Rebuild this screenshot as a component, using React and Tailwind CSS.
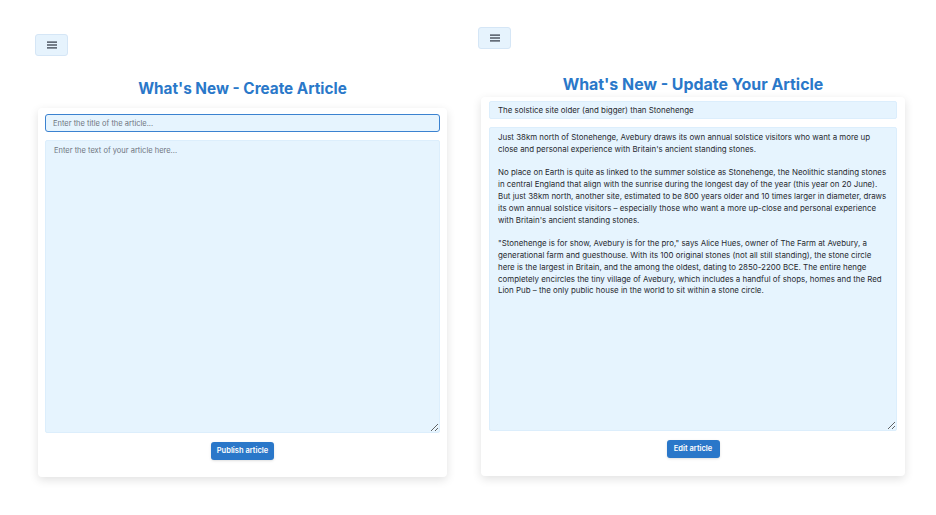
import React from 'react';

const article = `Just 38km north of Stonehenge, Avebury draws its own annual solstice visitors who want a more up
close and personal experience with Britain's ancient standing stones.

No place on Earth is quite as linked to the summer solstice as Stonehenge, the Neolithic standing stones
in central England that align with the sunrise during the longest day of the year (this year on 20 June).
But just 38km north, another site, estimated to be 800 years older and 10 times larger in diameter, draws
its own annual solstice visitors – especially those who want a more up-close and personal experience
with Britain's ancient standing stones.

"Stonehenge is for show, Avebury is for the pro," says Alice Hues, owner of The Farm at Avebury, a
generational farm and guesthouse. With its 100 original stones (not all still standing), the stone circle
here is the largest in Britain, and the among the oldest, dating to 2850-2200 BCE. The entire henge
completely encircles the tiny village of Avebury, which includes a handful of shops, homes and the Red
Lion Pub – the only public house in the world to sit within a stone circle.`;

const MenuButton = () => (
  <button className="flex h-[22px] w-[33px] items-center justify-center rounded-[3px] border border-[#d5e6f6] bg-[#e6f3fd]">
    <svg width="10" height="8" viewBox="0 0 10 8" className="text-[#2d3440]">
      <rect x="0" y="0.5" width="10" height="1.2" fill="currentColor" />
      <rect x="0" y="3.4" width="10" height="1.2" fill="currentColor" />
      <rect x="0" y="6.3" width="10" height="1.2" fill="currentColor" />
    </svg>
  </button>
);

const ActionButton = ({ children, width }) => (
  <button
    className={`h-[18px] ${width} rounded-[3px] bg-[#2a77c9] text-[7.5px] font-semibold text-white shadow-sm`}
  >
    {children}
  </button>
);

export default function App() {
  return (
    <div className="flex h-[515px] w-[936px] bg-white font-['Inter','Noto_Sans',sans-serif] text-[#262a30]">
      {/* Create article */}
      <div className="ml-[35px] w-[415px] pt-[34px]">
        <MenuButton />
        <h1 className="mt-[22px] text-center text-[15.3px] font-bold leading-[22px] text-[#2a78c9]">
          What's New - Create Article
        </h1>
        <div className="mx-[3px] mt-[8px] flex h-[369px] flex-col rounded-[4px] bg-white px-[7px] pt-[6px] pb-[17px] shadow-[0_3px_10px_rgba(0,0,0,0.12)]">
          <input
            className="h-[18px] w-full rounded-[3px] border-[1.5px] border-[#3b82d0] bg-[#e6f4fe] px-[7px] text-[7.5px] outline-none placeholder:text-[#6f757e]"
            placeholder="Enter the title of the article..."
          />
          <textarea
            className="mt-[8px] h-[293px] w-full rounded-[2px] border border-[#dceefc] bg-[#e6f4fe] px-[8px] pt-[4px] text-[7.5px] leading-[12px] outline-none placeholder:text-[#6f757e]"
            placeholder="Enter the text of your article here..."
          />
          <div className="mt-[9px] flex justify-center">
            <ActionButton width="w-[63px]">Publish article</ActionButton>
          </div>
        </div>
      </div>

      {/* Update article */}
      <div className="ml-[28px] w-[430px] pt-[27px]">
        <MenuButton />
        <h1 className="mt-[25px] text-center text-[15.9px] font-bold leading-[22px] text-[#2a78c9]">
          What's New - Update Your Article
        </h1>
        <div className="mx-[3px] mt-[1px] flex h-[379px] flex-col rounded-[4px] bg-white px-[8px] pt-[4px] pb-[17px] shadow-[0_3px_10px_rgba(0,0,0,0.12)]">
          <input
            className="h-[18px] w-full rounded-[2px] border border-[#dceefc] bg-[#e6f4fe] px-[8px] text-[7.9px] outline-none"
            defaultValue="The solstice site older (and bigger) than Stonehenge"
          />
          <textarea
            className="mt-[8px] h-[304px] w-full rounded-[2px] border border-[#dceefc] bg-[#e6f4fe] px-[8px] pt-[4px] text-[7.9px] leading-[11.8px] outline-none"
            defaultValue={article}
            spellCheck={false}
          />
          <div className="mt-[9px] flex justify-center">
            <ActionButton width="w-[53px]">Edit article</ActionButton>
          </div>
        </div>
      </div>
    </div>
  );
}
